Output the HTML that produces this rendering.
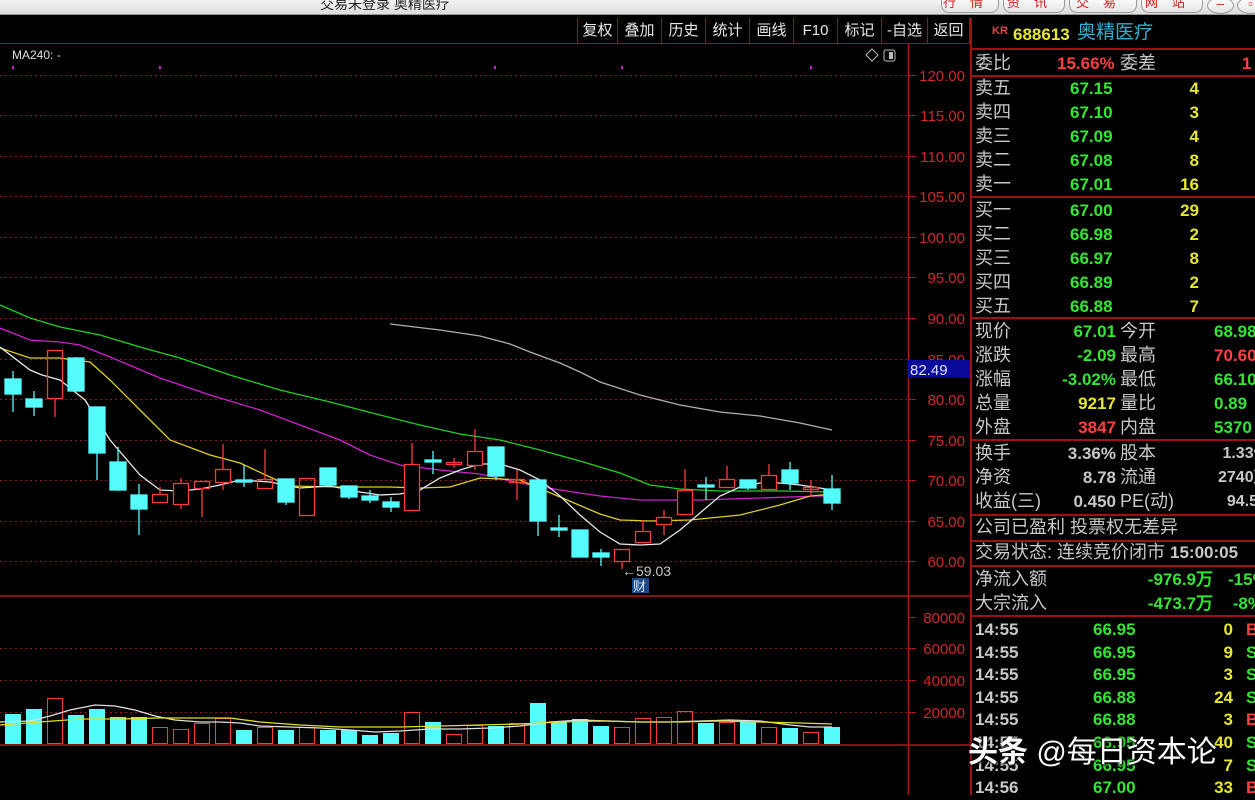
<!DOCTYPE html>
<html><head><meta charset="utf-8"><style>
*{margin:0;padding:0;box-sizing:border-box}
body{width:1255px;height:795px;background:#000;overflow:hidden;position:relative;font-family:"Liberation Sans","Noto Sans CJK SC",sans-serif}
.tb{position:absolute;left:0;top:0;width:1255px;height:15px;background:linear-gradient(#f4f4f4,#dcdcdc);border-bottom:1px solid #999}
.tt{position:absolute;left:320px;top:-6px;font-size:14px;color:#222}
.wb{position:absolute;top:-4px;height:17px;border:1px solid #999;border-radius:0 0 8px 8px;background:linear-gradient(#fff,#e4e4e4);color:#d02020;font-size:13px;text-align:center;line-height:12px;letter-spacing:14px}
.bt{position:absolute;top:18px;height:25px;border-left:1px solid #a01010;color:#e8e8e8;font-size:15px;line-height:25px;text-align:center}
.p{position:absolute;font-size:18px;color:#c8c8c8;white-space:nowrap;line-height:22px}
.g{color:#32e632}.y{color:#e6e632}.r{color:#ff4040}.w{color:#c8c8c8}
.n{font-family:"Liberation Sans",sans-serif;font-weight:bold;font-size:17px}
.hl{position:absolute;left:970px;width:285px;height:2px;background:#a01010}
</style></head><body>
<div class="tb"><div class="tt">交易未登录 奥精医疗</div>
<div class="wb" style="left:941px;width:58px">行情</div>
<div class="wb" style="left:1003px;width:62px">资讯</div>
<div class="wb" style="left:1069px;width:68px">交易</div>
<div class="wb" style="left:1141px;width:62px">网站</div>
<div class="wb" style="left:1207px;width:27px;border-radius:50%;top:-3px;letter-spacing:0">–</div>
<div class="wb" style="left:1237px;width:27px;border-radius:50%;top:-3px;letter-spacing:0">▫</div>
</div>
<div style="position:absolute;left:0;top:43px;width:970px;height:1px;background:#a01010"></div>
<div class="bt" style="left:577px;width:40px">复权</div>
<div class="bt" style="left:617px;width:44px">叠加</div>
<div class="bt" style="left:661px;width:44px">历史</div>
<div class="bt" style="left:705px;width:44px">统计</div>
<div class="bt" style="left:749px;width:44px">画线</div>
<div class="bt" style="left:793px;width:44px">F10</div>
<div class="bt" style="left:837px;width:44px">标记</div>
<div class="bt" style="left:881px;width:46px">-自选</div>
<div class="bt" style="left:927px;width:43px;border-right:1px solid #a01010">返回</div>

<svg style="position:absolute;left:0;top:0" width="970" height="795">
<g stroke="#8a1a1a" stroke-dasharray="2,3" stroke-width="1">
<line x1="0" y1="75.5" x2="908" y2="75.5"/><line x1="0" y1="115.5" x2="908" y2="115.5"/><line x1="0" y1="156.5" x2="908" y2="156.5"/><line x1="0" y1="196.5" x2="908" y2="196.5"/><line x1="0" y1="237.5" x2="908" y2="237.5"/><line x1="0" y1="277.5" x2="908" y2="277.5"/><line x1="0" y1="318.5" x2="908" y2="318.5"/><line x1="0" y1="359.5" x2="908" y2="359.5"/><line x1="0" y1="399.5" x2="908" y2="399.5"/><line x1="0" y1="440.5" x2="908" y2="440.5"/><line x1="0" y1="480.5" x2="908" y2="480.5"/><line x1="0" y1="521.5" x2="908" y2="521.5"/><line x1="0" y1="561.5" x2="908" y2="561.5"/>
<line x1="0" y1="648.5" x2="908" y2="648.5"/><line x1="0" y1="680.5" x2="908" y2="680.5"/><line x1="0" y1="712.5" x2="908" y2="712.5"/>
</g>
<g stroke="#b01818" stroke-width="1.5">
<line x1="908.5" y1="44" x2="908.5" y2="795"/>
<line x1="0" y1="596" x2="970" y2="596"/>
<line x1="0" y1="745" x2="970" y2="745"/>
</g>
<g stroke="#b01818">
<line x1="908" y1="75.5" x2="916" y2="75.5"/><line x1="908" y1="115.5" x2="916" y2="115.5"/><line x1="908" y1="156.5" x2="916" y2="156.5"/><line x1="908" y1="196.5" x2="916" y2="196.5"/><line x1="908" y1="237.5" x2="916" y2="237.5"/><line x1="908" y1="277.5" x2="916" y2="277.5"/><line x1="908" y1="318.5" x2="916" y2="318.5"/><line x1="908" y1="399.5" x2="916" y2="399.5"/><line x1="908" y1="440.5" x2="916" y2="440.5"/><line x1="908" y1="480.5" x2="916" y2="480.5"/><line x1="908" y1="521.5" x2="916" y2="521.5"/><line x1="908" y1="561.5" x2="916" y2="561.5"/>
<line x1="908" y1="617.5" x2="916" y2="617.5"/><line x1="908" y1="648.5" x2="916" y2="648.5"/><line x1="908" y1="680.5" x2="916" y2="680.5"/><line x1="908" y1="712.5" x2="916" y2="712.5"/>
</g>
<g fill="#d02828" font-size="15" font-family="Liberation Sans,sans-serif" text-anchor="end">
<text x="965" y="81">120.00</text><text x="965" y="121">115.00</text><text x="965" y="162">110.00</text><text x="965" y="202">105.00</text><text x="965" y="243">100.00</text><text x="965" y="283">95.00</text><text x="965" y="324">90.00</text><text x="965" y="365">85.00</text><text x="965" y="405">80.00</text><text x="965" y="446">75.00</text><text x="965" y="486">70.00</text><text x="965" y="527">65.00</text><text x="965" y="567">60.00</text>
<text x="965" y="623">80000</text><text x="965" y="654">60000</text><text x="965" y="686">40000</text><text x="965" y="718">20000</text>
</g>
<rect x="908" y="360" width="62" height="18" fill="#0a0a9a"/>
<text x="910" y="375" fill="#e0e0ff" font-size="15" font-family="Liberation Sans,sans-serif">82.49</text>
<text x="12" y="59" fill="#e0e0e0" font-size="12" font-family="Liberation Sans,sans-serif">MA240: -</text>
<path d="M872 49 L878 55 L872 61 L866 55Z" fill="none" stroke="#bbb"/>
<rect x="884" y="50" width="11" height="11" rx="2" fill="none" stroke="#bbb"/><rect x="889" y="52" width="4" height="7" fill="#bbb"/>
<g fill="#c020c0"><rect x="12" y="66" width="2" height="3"/><rect x="159" y="66" width="2" height="3"/><rect x="494" y="66" width="2" height="3"/><rect x="621" y="66" width="2" height="3"/><rect x="810" y="66" width="2" height="3"/></g>

<g fill="none" stroke-width="1.3">
<polyline stroke="#20d020" points="0,305 30,318 60,327 100,335 140,347 180,358 230,375 280,390 330,402 380,415 420,425 460,434 500,440 540,450 580,461 620,473 650,485 680,489 720,491 780,491 832,492"/>
<polyline stroke="#d020d0" points="0,328 30,340 60,342 80,345 110,357 160,378 210,395 260,410 300,425 340,440 370,455 400,465 440,470 480,474 520,483 560,490 600,496 640,500 700,500 760,498 820,496 832,496"/>
<polyline stroke="#e0d020" points="0,348 30,358 60,358 90,362 110,380 140,410 170,440 210,455 240,463 270,477 290,486 340,487 390,487 420,488 450,487 480,478 520,480 560,497 600,514 620,520 650,521 690,520 740,515 780,505 810,496 832,494"/>
<polyline stroke="#e8e8e8" points="0,347 30,370 42,375 60,380 85,400 110,440 140,475 160,490 180,491 200,489 220,485 240,480 270,482 300,488 330,486 360,492 380,495 400,494 420,490 440,478 460,470 480,464 500,464 520,470 540,480 560,496 580,515 600,532 620,544 640,545 660,544 680,530 700,513 720,496 740,487 760,483 780,483 800,485 820,488 832,490"/>
<polyline stroke="#b0b0b0" points="390,324 440,330 480,336 510,344 530,352 560,363 580,372 600,382 640,395 680,405 720,412 760,416 800,423 832,430"/>
</g>

<g stroke-width="1.3">
<g stroke="#54fcfc" fill="#54fcfc">
<line x1="13" y1="371" x2="13" y2="412"/><rect x="5" y="379" width="16" height="15"/>
<line x1="34" y1="391" x2="34" y2="416"/><rect x="26" y="399" width="16" height="8"/>
<line x1="76" y1="357" x2="76" y2="391"/><rect x="68" y="358" width="16" height="33"/>
<line x1="97" y1="407" x2="97" y2="480"/><rect x="89" y="407" width="16" height="46"/>
<line x1="118" y1="447" x2="118" y2="491"/><rect x="110" y="462" width="16" height="28"/>
<line x1="139" y1="484" x2="139" y2="535"/><rect x="131" y="495" width="16" height="14"/>
<line x1="244" y1="465" x2="244" y2="487"/><rect x="236" y="480" width="16" height="2"/>
<line x1="286" y1="479" x2="286" y2="505"/><rect x="278" y="479" width="16" height="23"/>
<line x1="328" y1="468" x2="328" y2="487"/><rect x="320" y="468" width="16" height="17"/>
<line x1="349" y1="486" x2="349" y2="499"/><rect x="341" y="486" width="16" height="11"/>
<line x1="370" y1="490" x2="370" y2="503"/><rect x="362" y="496" width="16" height="4"/>
<line x1="391" y1="497" x2="391" y2="512"/><rect x="383" y="502" width="16" height="5"/>
<line x1="433" y1="451" x2="433" y2="474"/><rect x="425" y="460" width="16" height="2"/>
<line x1="496" y1="447" x2="496" y2="480"/><rect x="488" y="447" width="16" height="29"/>
<line x1="538" y1="480" x2="538" y2="536"/><rect x="530" y="480" width="16" height="41"/>
<line x1="559" y1="515" x2="559" y2="537"/><rect x="551" y="528" width="16" height="2"/>
<line x1="580" y1="530" x2="580" y2="557"/><rect x="572" y="530" width="16" height="27"/>
<line x1="601" y1="549" x2="601" y2="566"/><rect x="593" y="553" width="16" height="4"/>
<line x1="706" y1="477" x2="706" y2="500"/><rect x="698" y="485" width="16" height="2"/>
<line x1="748" y1="480" x2="748" y2="490"/><rect x="740" y="480" width="16" height="8"/>
<line x1="790" y1="462" x2="790" y2="490"/><rect x="782" y="470" width="16" height="13"/>
<line x1="832" y1="475" x2="832" y2="510"/><rect x="824" y="489" width="16" height="14"/>
</g>
<g stroke="#ff3a3a" fill="none">
<line x1="55" y1="399" x2="55" y2="417"/><rect x="47.5" y="350.5" width="15" height="48"/>
<line x1="160" y1="487" x2="160" y2="494"/><rect x="152.5" y="494.5" width="15" height="8"/>
<line x1="181" y1="478" x2="181" y2="509"/><rect x="173.5" y="483.5" width="15" height="21" fill="#000"/>
<line x1="202" y1="489" x2="202" y2="517"/><rect x="194.5" y="481.5" width="15" height="7"/>
<line x1="223" y1="444" x2="223" y2="490"/><rect x="215.5" y="469.5" width="15" height="13" fill="#000"/>
<line x1="265" y1="449" x2="265" y2="479"/><rect x="257.5" y="479.5" width="15" height="9"/>
<rect x="299.5" y="478.5" width="15" height="37"/>
<line x1="412" y1="443" x2="412" y2="464"/><rect x="404.5" y="464.5" width="15" height="46" fill="#000"/>
<line x1="454" y1="458" x2="454" y2="468"/><rect x="446.5" y="462.5" width="15" height="2"/>
<line x1="475" y1="429" x2="475" y2="470"/><rect x="467.5" y="451.5" width="15" height="14" fill="#000"/>
<line x1="517" y1="470" x2="517" y2="500"/><rect x="509.5" y="479.5" width="15" height="3"/>
<line x1="622" y1="562" x2="622" y2="569"/><rect x="614.5" y="549.5" width="15" height="12"/>
<line x1="643" y1="520" x2="643" y2="531"/><rect x="635.5" y="531.5" width="15" height="11"/>
<line x1="664" y1="510" x2="664" y2="535"/><rect x="656.5" y="517.5" width="15" height="7" fill="#000"/>
<line x1="685" y1="469" x2="685" y2="490"/><rect x="677.5" y="490.5" width="15" height="24" fill="#000"/>
<line x1="727" y1="466" x2="727" y2="479"/><rect x="719.5" y="479.5" width="15" height="8" fill="#000"/>
<line x1="769" y1="464" x2="769" y2="475"/><rect x="761.5" y="475.5" width="15" height="14" fill="#000"/>
<line x1="811" y1="480" x2="811" y2="497"/><rect x="803.5" y="487.5" width="15" height="2"/>
</g>
</g>
<text x="622" y="576" fill="#c8c8c8" font-size="14" font-family="Liberation Sans,sans-serif">←59.03</text>
<rect x="632" y="578" width="17" height="15" fill="#1a4a8a"/>
<text x="633" y="591" fill="#e0e8ff" font-size="13">财</text>

<g fill="#54fcfc">
<rect x="5" y="714" width="16" height="30"/><rect x="26" y="709" width="16" height="35"/><rect x="68" y="715" width="16" height="29"/><rect x="89" y="709" width="16" height="35"/><rect x="110" y="717" width="16" height="27"/><rect x="131" y="717" width="16" height="27"/><rect x="236" y="730" width="16" height="14"/><rect x="278" y="730" width="16" height="14"/><rect x="320" y="730" width="16" height="14"/><rect x="341" y="730" width="16" height="14"/><rect x="362" y="735" width="16" height="9"/><rect x="383" y="733" width="16" height="11"/><rect x="425" y="722" width="16" height="22"/><rect x="488" y="726" width="16" height="18"/><rect x="530" y="703" width="16" height="41"/><rect x="551" y="722" width="16" height="22"/><rect x="572" y="719" width="16" height="25"/><rect x="593" y="726" width="16" height="18"/><rect x="698" y="723" width="16" height="21"/><rect x="740" y="722" width="16" height="22"/><rect x="782" y="728" width="16" height="16"/><rect x="824" y="727" width="16" height="17"/>
</g>
<g fill="none" stroke="#ff3a3a">
<rect x="47.5" y="698.5" width="15" height="45"/><rect x="152.5" y="727.5" width="15" height="16"/><rect x="173.5" y="729.5" width="15" height="14"/><rect x="194.5" y="723.5" width="15" height="20"/><rect x="215.5" y="718.5" width="15" height="25"/><rect x="257.5" y="727.5" width="15" height="16"/><rect x="299.5" y="727.5" width="15" height="16"/><rect x="404.5" y="712.5" width="15" height="31"/><rect x="446.5" y="734.5" width="15" height="9"/><rect x="467.5" y="725.5" width="15" height="18"/><rect x="509.5" y="723.5" width="15" height="20"/><rect x="614.5" y="727.5" width="15" height="16"/><rect x="635.5" y="718.5" width="15" height="25"/><rect x="656.5" y="717.5" width="15" height="26"/><rect x="677.5" y="711.5" width="15" height="32"/><rect x="719.5" y="722.5" width="15" height="21"/><rect x="761.5" y="727.5" width="15" height="16"/><rect x="803.5" y="732.5" width="15" height="11"/>
</g>
<g fill="none" stroke-width="1.3">
<polyline stroke="#e0e0e0" points="0,722 30,721 50,716 70,710 95,705 115,706 135,710 155,716 175,720 200,722 220,722 240,723 260,726 290,727 320,728 350,730 375,732 400,731 430,729 460,729 490,728 520,726 550,722 580,720 610,721 640,722 670,722 700,721 730,720 760,721 790,725 810,727 832,727"/>
<polyline stroke="#e0e020" points="0,725 40,722 80,719 120,719 160,718 200,718 230,718 260,722 300,725 340,727 370,727 400,727 440,726 480,725 520,724 560,722 600,721 640,722 680,722 720,721 760,722 800,723 832,724"/>
</g>
</svg>

<div style="position:absolute;left:970px;top:18px;width:2px;height:777px;background:#a01010"></div>
<div class="p" style="left:992px;top:20px;font-size:11px;color:#e04848;font-weight:bold">KR</div>
<div class="p n y" style="left:1013px;top:24px">688613</div>
<div class="p" style="left:1077px;top:22px;color:#30b0d0;font-size:19px">奥精医疗</div>
<div class="hl" style="top:48px"></div>
<div class="p" style="left:975px;top:52px">委比</div><div class="p n r" style="left:1057px;top:53px">15.66%</div><div class="p" style="left:1120px;top:52px">委差</div><div class="p n r" style="left:1242px;top:53px">1</div>
<div class="hl" style="top:75px"></div>
<div class="p" style="left:975px;top:76px;line-height:24px">卖五<br>卖四<br>卖三<br>卖二<br>卖一</div>
<div class="p n g" style="left:1070px;top:77px;line-height:24px">67.15<br>67.10<br>67.09<br>67.08<br>67.01</div>
<div class="p n y" style="right:56px;top:77px;line-height:24px;text-align:right">4<br>3<br>4<br>8<br>16</div>
<div class="hl" style="top:196px"></div>
<div class="p" style="left:975px;top:198px;line-height:24px">买一<br>买二<br>买三<br>买四<br>买五</div>
<div class="p n g" style="left:1070px;top:199px;line-height:24px">67.00<br>66.98<br>66.97<br>66.89<br>66.88</div>
<div class="p n y" style="right:56px;top:199px;line-height:24px;text-align:right">29<br>2<br>8<br>2<br>7</div>
<div class="hl" style="top:317px"></div>
<div class="p" style="left:975px;top:319px;line-height:24px">现价<br>涨跌<br>涨幅<br>总量<br>外盘</div>
<div class="p n" style="right:139px;top:320px;line-height:24px;text-align:right"><span class="g">67.01</span><br><span class="g">-2.09</span><br><span class="g">-3.02%</span><br><span class="y">9217</span><br><span class="r">3847</span></div>
<div class="p" style="left:1120px;top:319px;line-height:24px">今开<br>最高<br>最低<br>量比<br>内盘</div>
<div class="p n" style="left:1214px;top:320px;line-height:24px"><span class="g">68.98</span><br><span class="r">70.60</span><br><span class="g">66.10</span><br><span class="g">0.89</span><br><span class="g">5370</span></div>
<div class="hl" style="top:439px"></div>
<div class="p" style="left:975px;top:441px;line-height:24px">换手<br>净资<br>收益(三)</div>
<div class="p n" style="right:139px;top:442px;line-height:24px;text-align:right;color:#c8c8c8">3.36%<br>8.78<br>0.450</div>
<div class="p" style="left:1120px;top:441px;line-height:24px">股本<br>流通<br>PE(动)</div>
<div class="p n" style="left:1218px;top:442px;line-height:24px;color:#c8c8c8;font-size:16px">&nbsp;1.33亿<br>2740万<br>&nbsp;&nbsp;94.5</div>
<div class="hl" style="top:514px"></div>
<div class="p" style="left:975px;top:516px">公司已盈利 投票权无差异</div>
<div class="hl" style="top:540px"></div>
<div class="p" style="left:975px;top:541px">交易状态: 连续竞价闭市 <span class="n">15:00:05</span></div>
<div class="hl" style="top:565px"></div>
<div class="p" style="left:975px;top:567px;line-height:24px">净流入额<br>大宗流入</div>
<div class="p n g" style="right:42px;top:568px;line-height:24px;text-align:right">-976.9万<br>-473.7万</div>
<div class="p n g" style="left:1228px;top:568px;line-height:24px">-15%<br>&nbsp;-8%</div>
<div class="hl" style="top:615px"></div>
<div class="p n" style="left:975px;top:619px;line-height:22.6px;color:#c8c8c8">14:55<br>14:55<br>14:55<br>14:55<br>14:55<br>14:55<br>14:55<br>14:56</div>
<div class="p n g" style="left:1093px;top:619px;line-height:22.6px">66.95<br>66.95<br>66.95<br>66.88<br>66.88<br>66.95<br>66.95<br>67.00</div>
<div class="p n y" style="right:22px;top:619px;line-height:22.6px;text-align:right">0<br>9<br>3<br>24<br>3<br>40<br>7<br>33</div>
<div class="p n" style="left:1246px;top:619px;line-height:22.6px"><span class="r">B</span><br><span class="g">S</span><br><span class="g">S</span><br><span class="g">S</span><br><span class="r">B</span><br><span class="g">S</span><br><span class="g">S</span><br><span class="r">B</span></div>
<div class="p" style="left:968px;top:733px;font-size:30px;line-height:40px;color:#fff;text-shadow:0 0 3px #000,1px 1px 2px #000"><b>头条</b> @每日资本论</div>
</body></html>
